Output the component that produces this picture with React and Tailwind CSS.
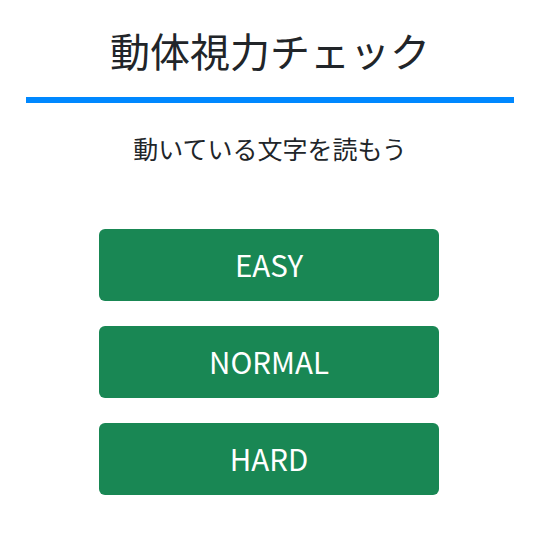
export default function App() {
  const levels = ["EASY", "NORMAL", "HARD"];
  return (
    <div
      className="w-[540px] h-[540px] bg-white text-[#212529]"
      style={{ fontFamily: '"Noto Sans CJK JP", "Noto Sans", sans-serif' }}
    >
      <h1 className="mx-[26px] mt-[20px] text-center text-[40px] leading-[60px] pb-[17px] border-b-[6px] border-[#0088ff] font-normal">
        動体視力チェック
      </h1>
      <p className="mt-[27px] text-center text-[25px] leading-[36px]">
        動いている文字を読もう
      </p>
      <div className="mt-[63px] pr-[2px] flex flex-col items-center gap-[25px]">
        {levels.map((level) => (
          <button
            key={level}
            className="w-[340px] h-[72px] rounded-[6px] bg-[#198754] text-white text-[29.5px] leading-none"
          >
            {level}
          </button>
        ))}
      </div>
    </div>
  );
}
